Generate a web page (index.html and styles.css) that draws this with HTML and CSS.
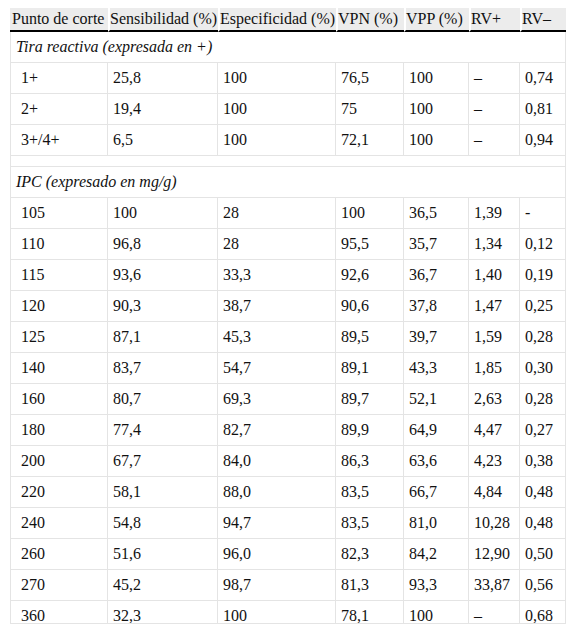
FILE: index.html
```html
<!DOCTYPE html>
<html lang="es">
<head>
<meta charset="utf-8">
<link rel="stylesheet" href="styles.css">
</head>
<body>
<div class="wrap">
<table class="data">
<colgroup>
<col class="c1"><col class="c2"><col class="c3"><col class="c4"><col class="c5"><col class="c6"><col class="c7">
</colgroup>
<thead>
<tr><th>Punto de corte</th><th>Sensibilidad (%)</th><th>Especificidad (%)</th><th>VPN (%)</th><th>VPP (%)</th><th>RV+</th><th>RV–</th></tr>
</thead>
<tbody>
<tr class="sec"><td colspan="7">Tira reactiva (expresada en +)</td></tr>
<tr><td>1+</td><td>25,8</td><td>100</td><td>76,5</td><td>100</td><td>–</td><td>0,74</td></tr>
<tr><td>2+</td><td>19,4</td><td>100</td><td>75</td><td>100</td><td>–</td><td>0,81</td></tr>
<tr><td>3+/4+</td><td>6,5</td><td>100</td><td>72,1</td><td>100</td><td>–</td><td>0,94</td></tr>
<tr class="spacer"><td colspan="7"></td></tr>
<tr class="sec"><td colspan="7">IPC (expresado en mg/g)</td></tr>
<tr><td>105</td><td>100</td><td>28</td><td>100</td><td>36,5</td><td>1,39</td><td>-</td></tr>
<tr><td>110</td><td>96,8</td><td>28</td><td>95,5</td><td>35,7</td><td>1,34</td><td>0,12</td></tr>
<tr><td>115</td><td>93,6</td><td>33,3</td><td>92,6</td><td>36,7</td><td>1,40</td><td>0,19</td></tr>
<tr><td>120</td><td>90,3</td><td>38,7</td><td>90,6</td><td>37,8</td><td>1,47</td><td>0,25</td></tr>
<tr><td>125</td><td>87,1</td><td>45,3</td><td>89,5</td><td>39,7</td><td>1,59</td><td>0,28</td></tr>
<tr><td>140</td><td>83,7</td><td>54,7</td><td>89,1</td><td>43,3</td><td>1,85</td><td>0,30</td></tr>
<tr><td>160</td><td>80,7</td><td>69,3</td><td>89,7</td><td>52,1</td><td>2,63</td><td>0,28</td></tr>
<tr><td>180</td><td>77,4</td><td>82,7</td><td>89,9</td><td>64,9</td><td>4,47</td><td>0,27</td></tr>
<tr><td>200</td><td>67,7</td><td>84,0</td><td>86,3</td><td>63,6</td><td>4,23</td><td>0,38</td></tr>
<tr><td>220</td><td>58,1</td><td>88,0</td><td>83,5</td><td>66,7</td><td>4,84</td><td>0,48</td></tr>
<tr><td>240</td><td>54,8</td><td>94,7</td><td>83,5</td><td>81,0</td><td>10,28</td><td>0,48</td></tr>
<tr><td>260</td><td>51,6</td><td>96,0</td><td>82,3</td><td>84,2</td><td>12,90</td><td>0,50</td></tr>
<tr><td>270</td><td>45,2</td><td>98,7</td><td>81,3</td><td>93,3</td><td>33,87</td><td>0,56</td></tr>
<tr><td>360</td><td>32,3</td><td>100</td><td>78,1</td><td>100</td><td>–</td><td>0,68</td></tr>
</tbody>
</table>
</div>
</body>
</html>
```
FILE: styles.css
```css
html, body {
  margin: 0;
  padding: 0;
  background: #fff;
}
body {
  font-family: "Liberation Serif", "Times New Roman", serif;
  font-size: 16px;
  color: #111;
}
.wrap {
  margin: 8px 0 0 10px;
  width: 556px;
  height: 615px;
  overflow: hidden;
  border-bottom: 1px solid #e4e4e4;
}
.data {
  width: 556px;
  table-layout: fixed;
  border-collapse: separate;
  border-spacing: 0;
  font-family: "Liberation Serif", "Times New Roman", serif;
  font-size: 16px;
}
.c1 { width: 98px; }
.c2 { width: 110px; }
.c3 { width: 118px; }
.c4 { width: 68px; }
.c5 { width: 65px; }
.c6 { width: 51px; }
.c7 { width: 46px; }
.data th {
  font-family: "Liberation Serif", "Times New Roman", serif;
  background: #ececec;
  font-weight: normal;
  text-align: left;
  white-space: nowrap;
  padding: 1px 0 1px 2px;
  line-height: 20px;
  border-bottom: 2px solid #000;
}
.data th + th {
  border-left: 2px solid #fff;
  padding-left: 0;
}
.data td {
  font-family: "Liberation Serif", "Times New Roman", serif;
  padding: 5px 4px 5px 5px;
  line-height: 20px;
  height: 20px;
  border-right: 1px solid #e4e4e4;
  border-bottom: 1px solid #e4e4e4;
  white-space: nowrap;
  text-align: left;
}
.data td:first-child {
  border-left: 1px solid #e4e4e4;
  padding-left: 10px;
}
.data .sec td {
  font-style: italic;
  padding-left: 5px;
}
.data .spacer td {
  padding: 0;
  height: 10px;
  line-height: 10px;
}
```
